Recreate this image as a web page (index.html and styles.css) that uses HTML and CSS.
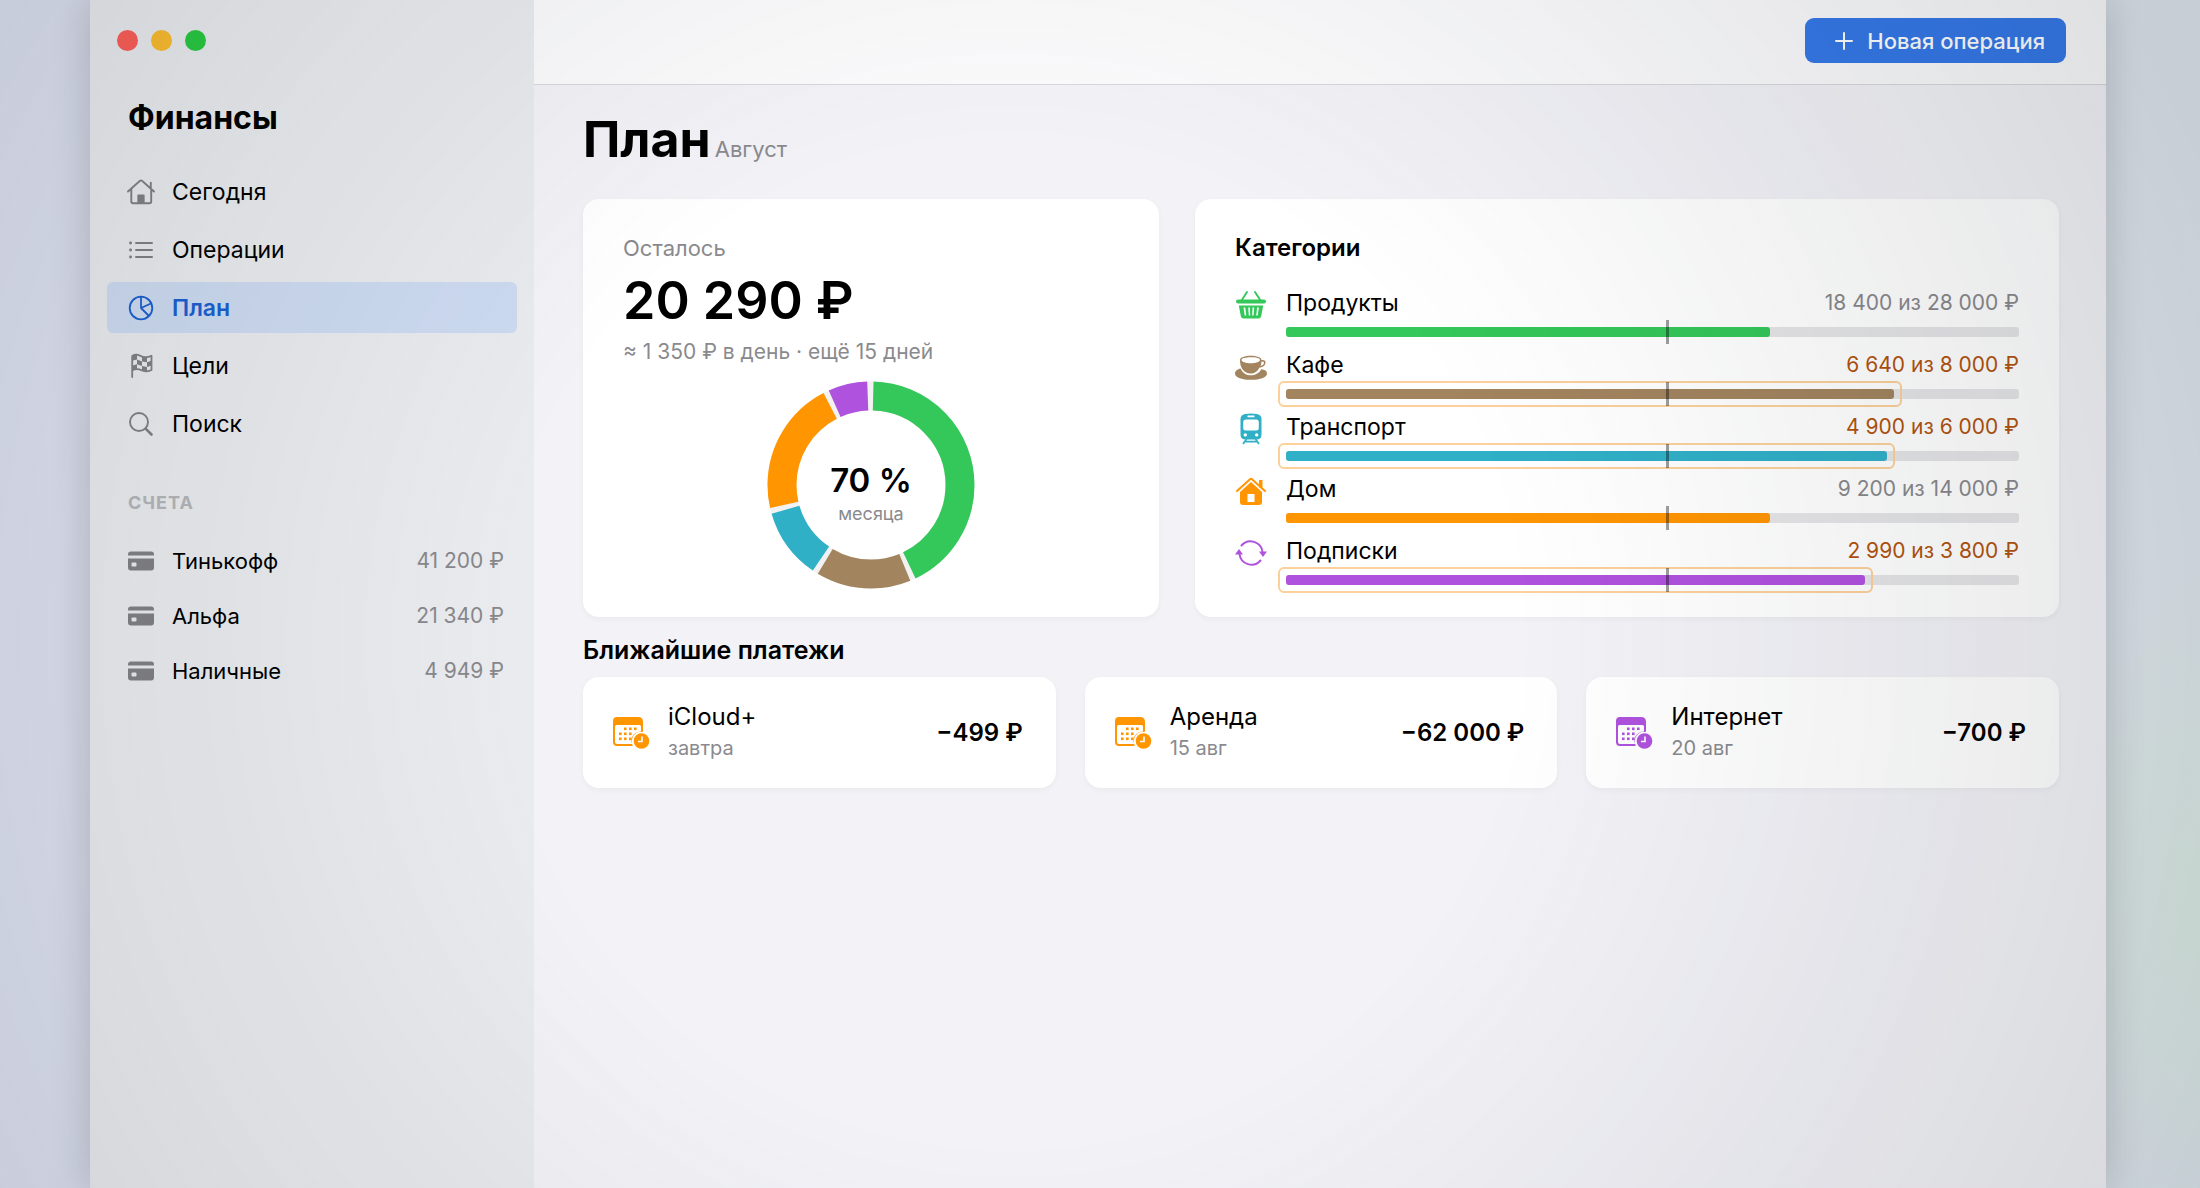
FILE: index.html
```html
<!DOCTYPE html>
<html lang="ru">
  <head>
    <meta charset="UTF-8" />
    <meta name="viewport" content="width=device-width, initial-scale=1.0" />
    <title>Финансы — План</title>
    <link rel="stylesheet" href="styles.css" />
  </head>
  <body>
    <!-- Общие иконки -->
    <svg class="sprite" aria-hidden="true">
      <symbol id="card" viewBox="0 0 28 28">
        <path d="M1 8.5V7.5Q1 4.5 4 4.5H24Q27 4.5 27 7.5V8.5Z" />
        <path fill-rule="evenodd" d="M1 11.5H27V20.5Q27 23.5 24 23.5H4Q1 23.5 1 20.5ZM5.5 15.5Q4.5 15.5 4.5 16.5V18.5Q4.5 19.5 5.5 19.5H8.5Q9.5 19.5 9.5 18.5V16.5Q9.5 15.5 8.5 15.5Z" />
      </symbol>
      <symbol id="calendar" viewBox="0 0 38 34">
        <path fill-rule="evenodd" d="M5 1H26Q31 1 31 6V15.8A9.2 9.2 0 0 0 20.5 29L20.7 30H5Q1 30 1 26V5Q1 1 5 1ZM4.5 9Q3 9 3 10.5V26Q3 28 5 28H20.2A9.6 9.6 0 0 1 29 15.6V10.5Q29 9 27.5 9Z" />
        <g>
          <rect x="12" y="11.5" width="2.6" height="2.6" /><rect x="17" y="11.5" width="2.6" height="2.6" /><rect x="22" y="11.5" width="2.6" height="2.6" />
          <rect x="7" y="16.5" width="2.6" height="2.6" /><rect x="12" y="16.5" width="2.6" height="2.6" /><rect x="17" y="16.5" width="2.6" height="2.6" />
          <rect x="7" y="21.5" width="2.6" height="2.6" /><rect x="12" y="21.5" width="2.6" height="2.6" /><rect x="17" y="21.5" width="2.6" height="2.6" />
        </g>
        <circle cx="29.5" cy="25" r="7.8" />
        <path d="M30 20.5V25.5H26" fill="none" stroke="#fff" stroke-width="1.6" />
      </symbol>
    </svg>

    <div class="window">
      <aside class="sidebar">
        <div class="lights">
          <span class="light red"></span>
          <span class="light yellow"></span>
          <span class="light green"></span>
        </div>
        <h2 class="app-name">Финансы</h2>

        <nav class="menu">
          <a href="#">
            <svg class="icon" viewBox="0 0 28 28" fill="none" stroke="currentColor" stroke-width="1.9" stroke-linecap="round" stroke-linejoin="round">
              <path d="M1 13.5 13 2.8Q14 2 15 2.8L27 13.5M4.3 11V23.5Q4.3 25.2 6 25.2H22.5Q24.2 25.2 24.2 23.5V11M23.8 10V4.8" />
              <path d="M11.3 25V17.5H16.7V25Z" fill="currentColor" />
            </svg>
            Сегодня
          </a>
          <a href="#">
            <svg class="icon" viewBox="0 0 28 28" fill="none" stroke="currentColor" stroke-width="2" stroke-linecap="round">
              <path d="M9 7H25M9 14H25M9 21H25" />
              <path d="M3.5 7h.1M3.5 14h.1M3.5 21h.1" stroke-width="2.8" />
            </svg>
            Операции
          </a>
          <a href="#" class="active" aria-current="page">
            <svg class="icon" viewBox="0 0 28 28" fill="none" stroke="currentColor" stroke-width="1.8" stroke-linejoin="round">
              <circle cx="14" cy="14" r="11.3" />
              <path d="M14 2.7V14L24.5 9.3M14 14 22 22" />
            </svg>
            План
          </a>
          <a href="#">
            <svg class="icon" viewBox="0 0 28 28" fill="none" stroke="currentColor" stroke-width="1.8" stroke-linejoin="round" stroke-linecap="round">
              <path d="M5.2 25V4C9 1.5 11.5 3 15 4.5S21 5.5 24.5 3.8V18C21 20 18 19.5 15 18.3S9 16 5.2 18.5" />
              <path stroke="none" fill="currentColor" d="M5 4 10 2.5V7.5L5 8.8ZM15 4.5 20 5.3V10.3L15 9.5ZM10 7.5 15 9.5V14L10 12.3ZM20 10.3 24.5 8.8V13.5L20 15ZM5 13.8 10 12.3V16.8L5 18.5ZM15 14 20 15V19.5L15 18.3Z" />
            </svg>
            Цели
          </a>
          <a href="#">
            <svg class="icon" viewBox="0 0 28 28" fill="none" stroke="currentColor" stroke-linecap="round">
              <circle cx="12" cy="12" r="9" stroke-width="1.9" />
              <path d="M18.8 18.8 24.5 24.5" stroke-width="2.6" />
            </svg>
            Поиск
          </a>
        </nav>

        <h3 class="group-name">СЧЕТА</h3>
        <ul class="accounts">
          <li><svg class="icon"><use href="#card" /></svg><span>Тинькофф</span><span class="sum">41 200 ₽</span></li>
          <li><svg class="icon"><use href="#card" /></svg><span>Альфа</span><span class="sum">21 340 ₽</span></li>
          <li><svg class="icon"><use href="#card" /></svg><span>Наличные</span><span class="sum">4 949 ₽</span></li>
        </ul>
      </aside>

      <div class="main">
        <header class="toolbar">
          <button type="button" class="add">
            <svg viewBox="0 0 18 18" fill="none" stroke="currentColor" stroke-width="2" stroke-linecap="round"><path d="M9 1V17M1 9H17" /></svg>
            Новая операция
          </button>
        </header>

        <main class="content">
          <div class="heading">
            <h1>План</h1>
            <span>Август</span>
          </div>

          <div class="cards">
            <section class="card left">
              <p class="label">Осталось</p>
              <p class="total">20 290 ₽</p>
              <p class="hint">≈ 1 350 ₽ в день · ещё 15 дней</p>
              <div class="donut">
                <!-- вся окружность = 1000, dasharray - доля категории -->
                <svg viewBox="0 0 208 208" fill="none" stroke-width="29">
                  <circle cx="104" cy="104" r="89" stroke="#f2f2f3" />
                  <g transform="rotate(-90 104 104)">
                    <circle cx="104" cy="104" r="89" pathLength="1000" stroke="#34c759" stroke-dasharray="425 1000" stroke-dashoffset="-4" />
                    <circle cx="104" cy="104" r="89" pathLength="1000" stroke="#a2845e" stroke-dasharray="148 1000" stroke-dashoffset="-438" />
                    <circle cx="104" cy="104" r="89" pathLength="1000" stroke="#30b0c7" stroke-dasharray="110 1000" stroke-dashoffset="-595" />
                    <circle cx="104" cy="104" r="89" pathLength="1000" stroke="#ff9500" stroke-dasharray="210 1000" stroke-dashoffset="-714" />
                    <circle cx="104" cy="104" r="89" pathLength="1000" stroke="#af52de" stroke-dasharray="61 1000" stroke-dashoffset="-933" />
                  </g>
                </svg>
                <div class="donut-text"><strong>70 %</strong><span>месяца</span></div>
              </div>
            </section>

            <section class="card categories">
              <h2>Категории</h2>
              <ul>
                <li class="groceries">
                  <svg class="cat-icon" viewBox="0 0 32 32" fill="currentColor">
                    <path d="M12 3 6.5 11.5M20 3 25.5 11.5" fill="none" stroke="currentColor" stroke-width="1.9" stroke-linecap="round" />
                    <rect x="1" y="10.5" width="30" height="4" rx="2" />
                    <path fill-rule="evenodd" d="M3.8 16.5H28.2L26.2 27Q25.7 29.5 23.5 29.5H8.5Q6.3 29.5 5.8 27ZM8.5 18.5 9.7 26.5H11.2L10.3 18.5ZM13.2 18.5 13.8 26.5H15.2L14.9 18.5ZM17.5 18.5 17.2 26.5H18.6L19.2 18.5ZM22.1 18.5 21.2 26.5H22.7L23.9 18.5Z" />
                  </svg>
                  <span class="name">Продукты</span><span class="sum">18 400 из 28 000 ₽</span>
                  <div class="bar"><div class="fill" style="width: 66%"></div><i class="mark"></i></div>
                </li>
                <li class="cafe over">
                  <svg class="cat-icon" viewBox="0 0 32 32" fill="currentColor">
                    <path fill-rule="evenodd" d="M5 9C5 6.5 10 4.8 15.8 4.8S26.5 6.5 26.5 9C29 8.5 31 9.5 30.5 12C30 15 27 16.5 24.5 16.5C22.5 20.5 19.5 22.5 15.8 22.5C9 22.5 5 17 5 9ZM6.5 9C6.5 11 11 12.2 15.8 12.2S25 11 25 9S21 6.2 15.8 6.2S6.5 7.2 6.5 9ZM26.5 10.5Q26.5 13 25.5 14.8C27.5 14.5 29 13.5 29 11.8Q29 10.3 26.5 10.5Z" />
                    <path d="M5.5 17.5C8 22.5 11.5 24.3 15.8 24.3S24 22.5 26.3 18.3C30 18.5 32 20 32 22.5C32 26.5 25 28.8 16 28.8S0 26.5 0 22.5C0 20 2.5 18 5.5 17.5Z" />
                  </svg>
                  <span class="name">Кафе</span><span class="sum">6 640 из 8 000 ₽</span>
                  <div class="bar"><div class="fill" style="width: 83%"></div><i class="mark"></i></div>
                </li>
                <li class="transport over">
                  <svg class="cat-icon" viewBox="0 0 32 32" fill="currentColor">
                    <path fill-rule="evenodd" d="M10 1Q16 0 22 1Q26.5 2 26.5 6V21.5Q26.5 26.5 21.5 26.5H10.5Q5.5 26.5 5.5 21.5V6Q5.5 2 10 1ZM12.5 2.5V4.3H19.5V2.5ZM10.5 6.5Q8.2 6.5 8.2 9V15Q8.2 17.5 10.5 17.5H21.5Q23.8 17.5 23.8 15V9Q23.8 6.5 21.5 6.5ZM10.3 20.2A1.7 1.7 0 1 0 10.3 23.6A1.7 1.7 0 1 0 10.3 20.2ZM21.7 20.2A1.7 1.7 0 1 0 21.7 23.6A1.7 1.7 0 1 0 21.7 20.2Z" />
                    <path d="M11.5 26 8 31M20.5 26 24 31M10 28.7H22" fill="none" stroke="currentColor" stroke-width="1.8" />
                  </svg>
                  <span class="name">Транспорт</span><span class="sum">4 900 из 6 000 ₽</span>
                  <div class="bar"><div class="fill" style="width: 82%"></div><i class="mark"></i></div>
                </li>
                <li class="home">
                  <svg class="cat-icon" viewBox="0 0 32 32" fill="currentColor">
                    <path d="M2 16 15 4.3Q16 3.4 17 4.3L30 16" fill="none" stroke="currentColor" stroke-width="2" stroke-linecap="round" />
                    <rect x="24" y="5" width="3.5" height="7.5" />
                    <path fill-rule="evenodd" d="M16 7 27 17V27Q27 30 24 30H8Q5 30 5 27V17ZM12.5 19V27H19.5V19Z" />
                  </svg>
                  <span class="name">Дом</span><span class="sum">9 200 из 14 000 ₽</span>
                  <div class="bar"><div class="fill" style="width: 66%"></div><i class="mark"></i></div>
                </li>
                <li class="subs over">
                  <svg class="cat-icon" viewBox="0 0 32 32" fill="currentColor">
                    <path d="M6.5 8.5A12 12 0 0 1 27.5 15M25.5 23.5A12 12 0 0 1 4.5 17" fill="none" stroke="currentColor" stroke-width="2" stroke-linecap="round" />
                    <path d="M24 14.5H32L28 20Z M0 17.5H8L4 12Z" />
                  </svg>
                  <span class="name">Подписки</span><span class="sum">2 990 из 3 800 ₽</span>
                  <div class="bar"><div class="fill" style="width: 79%"></div><i class="mark"></i></div>
                </li>
              </ul>
            </section>
          </div>

          <h2 class="section-title">Ближайшие платежи</h2>
          <div class="payments">
            <article class="card payment">
              <svg class="cal orange"><use href="#calendar" /></svg>
              <div class="what"><span>iCloud+</span><small>завтра</small></div>
              <strong>−499 ₽</strong>
            </article>
            <article class="card payment">
              <svg class="cal orange"><use href="#calendar" /></svg>
              <div class="what"><span>Аренда</span><small>15 авг</small></div>
              <strong>−62 000 ₽</strong>
            </article>
            <article class="card payment">
              <svg class="cal purple"><use href="#calendar" /></svg>
              <div class="what"><span>Интернет</span><small>20 авг</small></div>
              <strong>−700 ₽</strong>
            </article>
          </div>
        </main>
      </div>
    </div>
  </body>
</html>
```
FILE: styles.css
```css
* {
  box-sizing: border-box;
  margin: 0;
  padding: 0;
}

body {
  min-height: 100vh;
  display: flex;
  padding: 0 94px 0 90px;
  font-family: Inter, "Liberation Sans", sans-serif;
  font-size: 23px;
  line-height: 28px;
  color: #000;
  background:
    radial-gradient(ellipse 8% 30% at 100% 76%, #dcebe4 0%, rgba(220, 235, 228, 0) 100%),
    linear-gradient(90deg, #dde1f0 0%, #dde1f0 50%, #e0e8ef 100%);
}

/* затемнение по краям экрана */
body::after {
  content: "";
  position: fixed;
  inset: 0;
  pointer-events: none;
  background: radial-gradient(ellipse 60% 110% at 46% 54%, rgba(20, 25, 35, 0) 38%, rgba(20, 25, 35, 0.12) 100%);
}

ul {
  list-style: none;
}

.sprite {
  display: none;
}

.window {
  flex: 1;
  display: flex;
  background: #f2f2f7;
  box-shadow: 0 0 36px rgba(0, 0, 0, 0.18);
}

/* Боковая панель */
.sidebar {
  width: 444px;
  flex-shrink: 0;
  padding: 30px 17px;
  background: #e9ebee;
}

.lights {
  display: flex;
  gap: 13px;
  padding-left: 10px;
}

.light {
  width: 21px;
  height: 21px;
  border-radius: 50%;
}

.light.red { background: #fc5d57; }
.light.yellow { background: #fabb2e; }
.light.green { background: #28c840; }

.app-name {
  padding: 47px 21px 28px;
  font-size: 32px;
  line-height: 40px;
}

.menu {
  display: grid;
  gap: 7px;
}

.menu a,
.accounts li {
  display: flex;
  align-items: center;
  gap: 17px;
  height: 51px;
  padding: 0 13px 0 20px;
  color: #000;
  text-decoration: none;
}

.icon {
  width: 28px;
  height: 28px;
  color: #808084;
  fill: currentColor;
}

.menu .icon {
  fill: none;
}

.menu .active {
  border-radius: 6px;
  background: #cddbf1;
  color: #1a5fd0;
  font-weight: 600;
}

.menu .active .icon {
  color: inherit;
}

.group-name {
  padding: 42px 21px 18px;
  font-size: 18px;
  line-height: 24px;
  letter-spacing: 1px;
  color: #b4b5b9;
}

.accounts li {
  height: 55px;
  font-size: 22px;
}

.sum {
  margin-left: auto;
  font-size: 21px;
  color: #88888c;
}

/* Основная часть */
.main {
  flex: 1;
}

.toolbar {
  display: flex;
  justify-content: flex-end;
  align-items: flex-start;
  height: 85px;
  padding: 18px 40px 0;
  background: #fbfbfc;
  border-bottom: 1px solid #d8d8dc;
}

.add {
  display: flex;
  align-items: center;
  gap: 14px;
  height: 45px;
  padding: 0 21px 0 30px;
  border: 0;
  border-radius: 9px;
  background: #3478e8;
  color: #fff;
  font: 500 22px/28px Inter, "Liberation Sans", sans-serif;
}

.add svg {
  width: 18px;
  height: 18px;
}

.content {
  padding: 22px 47px 40px 49px;
}

.heading {
  display: flex;
  align-items: baseline;
  gap: 4px;
  margin-bottom: 28px;
}

.heading h1 {
  font-size: 50px;
  line-height: 64px;
}

.heading span {
  font-size: 22px;
  color: #8a8a8e;
}

.cards {
  display: grid;
  grid-template-columns: 2fr 3fr;
  gap: 36px;
}

.card {
  border-radius: 16px;
  background: #fff;
  box-shadow: 0 2px 6px rgba(0, 0, 0, 0.04);
}

.left {
  padding: 35px 40px 28px;
}

.label {
  font-size: 22px;
  color: #8a8a8e;
}

.hint {
  font-size: 21px;
  color: #8a8a8e;
}

.total {
  margin: 8px 0 6px;
  font-size: 52px;
  font-weight: 600;
  line-height: 62px;
}

.donut {
  display: grid;
  place-items: center;
  width: 208px;
  margin: 15px auto 0;
}

.donut > * {
  grid-area: 1 / 1;
}

.donut svg {
  width: 208px;
  height: 208px;
}

.donut-text {
  display: grid;
  padding-top: 18px;
  text-align: center;
}

.donut-text strong {
  font-size: 33px;
  font-weight: 600;
  line-height: 40px;
}

.donut-text span {
  font-size: 18px;
  color: #8a8a8e;
}

.categories {
  padding: 35px 40px 20px;
}

.categories h2 {
  margin-bottom: 27px;
  font-size: 24px;
  font-weight: 600;
}

.categories ul {
  display: grid;
  gap: 14px;
}

.categories li {
  display: grid;
  grid-template-columns: 32px auto 1fr;
  column-gap: 19px;
  row-gap: 10px;
  align-items: center;
}

.cat-icon {
  width: 32px;
  height: 32px;
  margin-bottom: -4px;
}

.bar {
  grid-column: 2 / 4;
  position: relative;
  height: 10px;
  border-radius: 3px;
  background: #e5e5e7;
}

.fill {
  position: relative;
  height: 10px;
  border-radius: 3px;
  background: currentColor;
}

.over .sum {
  color: #b1530c;
}

/* рамка, когда тратим быстрее плана */
.over .fill::after {
  content: "";
  position: absolute;
  inset: -8px;
  border: 2px solid #fbd09a;
  border-radius: 6px;
}

/* сегодняшний день месяца */
.mark {
  position: absolute;
  left: 52%;
  top: -7px;
  width: 3px;
  height: 24px;
  margin-left: -1px;
  background: rgba(0, 0, 0, 0.38);
}

.groceries .cat-icon,
.groceries .fill { color: #34c759; }
.cafe .cat-icon,
.cafe .fill { color: #a2845e; }
.transport .cat-icon,
.transport .fill { color: #30b0c7; }
.home .cat-icon,
.home .fill { color: #ff9500; }
.subs .cat-icon,
.subs .fill { color: #af52de; }

.section-title {
  margin: 17px 0 11px;
  font-size: 25px;
  line-height: 32px;
  font-weight: 600;
}

.payments {
  display: grid;
  grid-template-columns: repeat(3, 1fr);
  gap: 29px;
}

.payment {
  display: flex;
  align-items: center;
  height: 111px;
  padding: 0 33px 0 29px;
}

.cal {
  width: 38px;
  height: 34px;
  fill: currentColor;
}

.orange { color: #ff9500; }
.purple { color: #af52de; }

.what {
  display: grid;
  row-gap: 3px;
  margin-left: 18px;
  font-size: 24px;
}

.what small {
  font-size: 20px;
  color: #8a8a8e;
}

.payment strong {
  margin-left: auto;
  font-size: 24px;
  font-weight: 600;
}
```
